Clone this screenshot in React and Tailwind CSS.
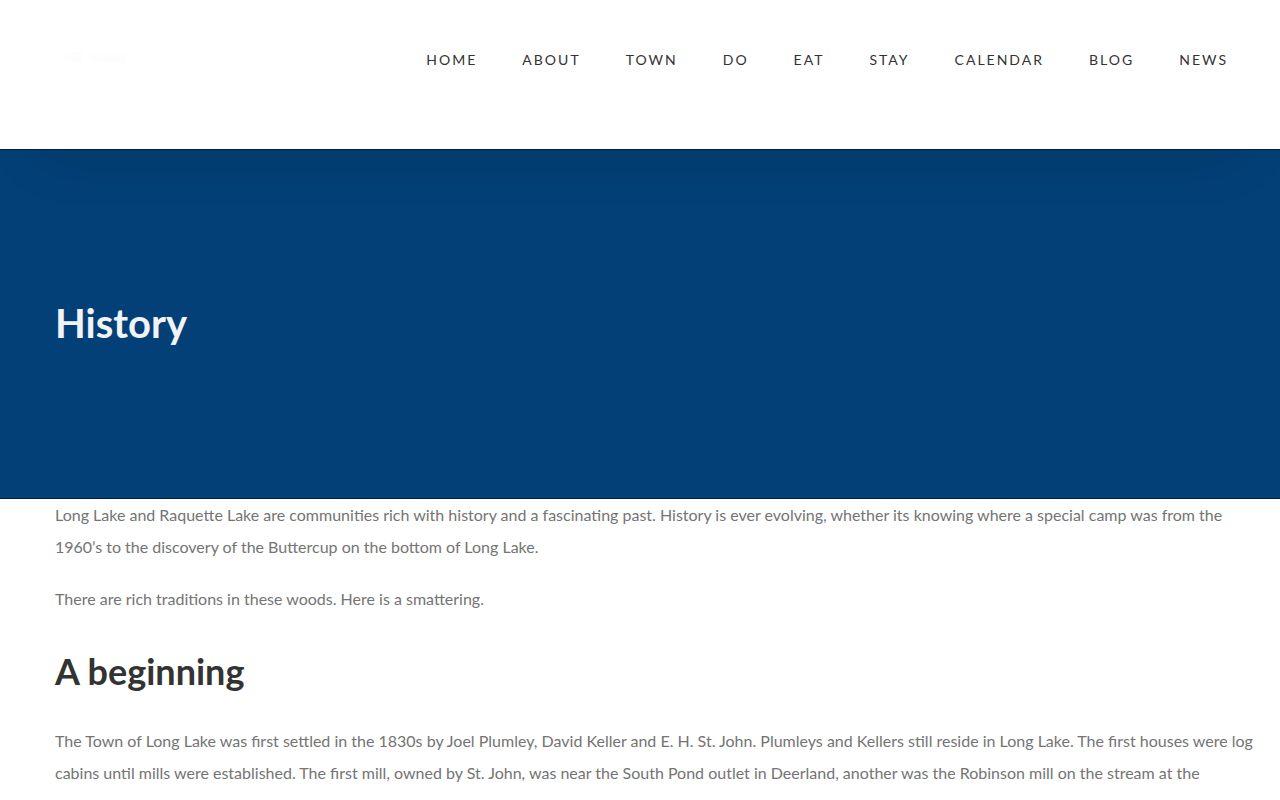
const navItems = ['Home', 'About', 'Town', 'Do', 'Eat', 'Stay', 'Calendar', 'Blog', 'News'];

const Header = () => {
  return (
    <header className="relative z-10 bg-white shadow-[0_40px_60px_-40px_rgba(0,0,0,0.16)]">
      <div className="flex items-start justify-between h-[149px] pl-[55px] pr-[52px] pt-[47px]">
        <a href="#" aria-label="Long Lake" className="block w-[72px] h-12">
          <svg viewBox="0 0 72 48" className="w-full h-full" fill="#fdfdfd">
            <path d="M9 9l6-4h12v11h-9l-4-4H9z" />
            <path d="M34 5h2v2h34v9H54v-2H36v-3h-2z" />
            <circle cx="27" cy="45" r="1" />
          </svg>
        </a>
        <nav>
          <ul className="flex gap-[45px]">
            {navItems.map((item) => (
              <li key={item}>
                <a href="#" className="text-sm leading-[22px] tracking-[2px] uppercase text-[#333]">
                  {item}
                </a>
              </li>
            ))}
          </ul>
        </nav>
      </div>
    </header>
  );
};

const Hero = () => {
  return (
    <section className="h-[350px] flex items-center px-[55px] pb-0.5 bg-[#034077] border-y border-[#03213f]">
      <h1 className="text-[40px] leading-[48px] font-bold text-[#f2f3f5]">History</h1>
    </section>
  );
};

const App = () => {
  return (
    <div className="min-h-screen bg-white font-['Lato',sans-serif]">
      <Header />
      <Hero />
      <main className="pl-[55px] pr-6 text-base leading-8 text-[#747474]">
        <p className="mb-5">
          Long Lake and Raquette Lake are communities rich with history and a fascinating past. History is ever
          evolving, whether its knowing where a special camp was from the 1960’s to the discovery of the Buttercup on
          the bottom of Long Lake.
        </p>
        <p>There are rich traditions in these woods. Here is a smattering.</p>
        <h2 className="pt-[33px] pb-[31px] text-4xl leading-[46px] font-bold text-[#333]">A beginning</h2>
        <p>
          The Town of Long Lake was first settled in the 1830s by Joel Plumley, David Keller and E. H. St. John.
          Plumleys and Kellers still reside in Long Lake. The first houses were log cabins until mills were
          established. The first mill, owned by St. John, was near the South Pond outlet in Deerland, another was the
          Robinson mill on the stream at the
        </p>
      </main>
    </div>
  );
};

export default App;
